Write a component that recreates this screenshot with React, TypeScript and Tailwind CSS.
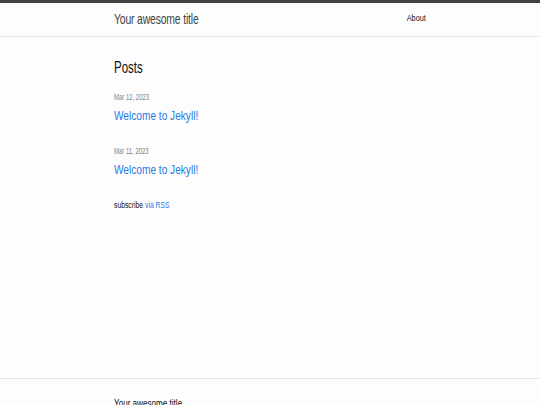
export default function App() {
  const posts = [
    { date: 'Mar 12, 2023', title: 'Welcome to Jekyll!' },
    { date: 'Mar 11, 2023', title: 'Welcome to Jekyll!' },
  ];

  return (
    <div
      className="h-[405px] overflow-hidden bg-[#fdfdfd] text-[#111111] flex flex-col"
      style={{ fontFamily: '"Liberation Sans", Arial, sans-serif' }}
    >
      {/* Header */}
      <header className="border-t-[3px] border-t-[#424242] border-b border-b-[#e8e8e8] shrink-0">
        <div className="w-[312px] mx-auto h-[33px] flex items-start justify-between">
          <span className="mt-[8px] inline-block origin-left scale-x-[0.69] text-[15px] leading-none tracking-[-0.2px] text-[#424242] whitespace-nowrap">
            Your awesome title
          </span>
          <span className="mt-[10px] inline-block origin-right scale-x-[0.77] text-[9.5px] leading-none text-[#111111]">
            About
          </span>
        </div>
      </header>

      {/* Content */}
      <main className="flex-1 w-[312px] mx-auto">
        <h2 className="mt-[23px] origin-left scale-x-[0.72] text-[16px] leading-none text-[#111111] whitespace-nowrap">
          Posts
        </h2>
        <ul>
          {posts.map((p, i) => (
            <li key={i} className={i === 0 ? 'mt-[17px]' : 'mt-[25px]'}>
              <div className="origin-left scale-x-[0.7] text-[8.5px] leading-none text-[#828282] whitespace-nowrap">
                {p.date}
              </div>
              <div className="mt-[7px] origin-left scale-x-[0.75] text-[13.5px] leading-none text-[#2a7ae2] whitespace-nowrap">
                {p.title}
              </div>
            </li>
          ))}
        </ul>
        <p className="mt-[25px] origin-left scale-x-[0.8] text-[8.5px] leading-none whitespace-nowrap">
          subscribe <span className="text-[#2a7ae2]">via RSS</span>
        </p>
      </main>

      {/* Footer */}
      <footer className="border-t border-t-[#e8e8e8] h-[27px] shrink-0">
        <div className="w-[312px] mx-auto pt-[20px]">
          <div className="origin-left scale-x-[0.81] text-[10px] leading-none text-[#111111] whitespace-nowrap">
            Your awesome title
          </div>
        </div>
      </footer>
    </div>
  );
}
